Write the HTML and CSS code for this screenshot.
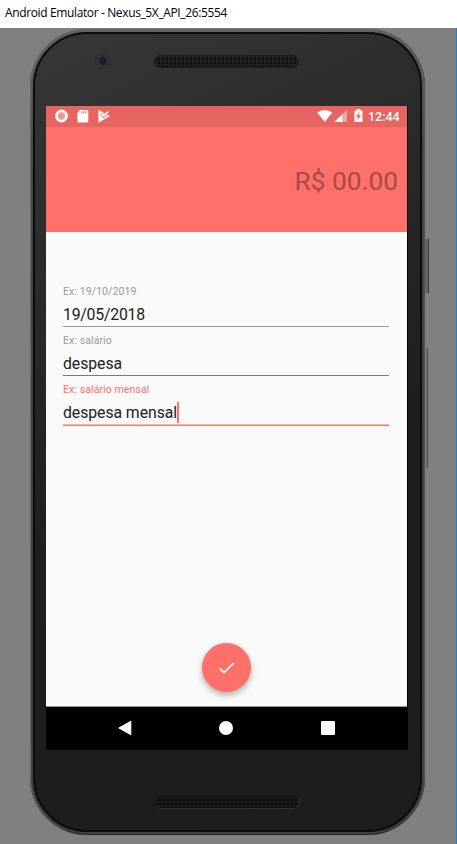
FILE: index.html
```
<!DOCTYPE html>
<html lang="pt-BR">
<head>
<meta charset="utf-8">
<title>Android Emulator</title>
<link rel="stylesheet" href="styles.css">
</head>
<body>
<header class="titlebar"><span class="title">Android Emulator - Nexus_5X_API_26:5554</span></header>
<main class="stage">
  <div class="phone">
    <i class="side-button power"></i><i class="side-button volume"></i>
    <div class="body">
      <div class="top">
        <span class="camera"></span>
        <span class="speaker"></span>
      </div>
      <div class="screen">
        <div class="statusbar">
          <svg class="status-left" width="58" height="14" viewBox="0 0 58 14">
            <circle cx="6.5" cy="7" r="5.2" fill="#f3b1ae" stroke="#fff" stroke-width="2.4"/>
            <circle cx="6.5" cy="7" r="2.6" fill="#ed9490"/>
            <path d="M24.8 1H32q1.3 0 1.3 1.3v9.9q0 1.3-1.3 1.3h-8.2q-1.4 0-1.4-1.3V4z" fill="#fff"/>
            <path d="M26.8 2.2v2.1M28.8 2.2v2.1M30.8 2.2v2.1" stroke="#e66560" stroke-width="1"/>
            <path d="M43.7 1.4 54.5 7.1 43.7 13.2z" fill="#fff" stroke="#fff" stroke-width=".5" stroke-linejoin="round"/>
            <path d="m45.9 4.6 2.8 2.9 5.4-5.7" fill="none" stroke="#e66560" stroke-width="2.8"/>
            <path d="m46.2 4.7 2.5 2.5 4.4-4.7" fill="none" stroke="#fff" stroke-width="1.7"/>
          </svg>
          <svg class="status-right" width="48" height="14" viewBox="0 0 48 14">
            <path d="M.2 3.6Q7.7-1.8 15.3 3.6L7.8 13z" fill="#fff"/>
            <path d="M30 .7V13H17.3z" fill="#f1a6a3"/>
            <path d="M25.3 5.3V13h-8z" fill="#fff"/>
            <path d="M38.2 1.4h1.5V0h3.6v1.4h1.4q.8 0 .8.8v10q0 .8-.8.8h-6.5q-.8 0-.8-.8v-10q0-.8.8-.8z" fill="#fff"/>
            <path d="M42.7 2.8 39 8h2.1l-.8 3.4L44 6.5h-2z" fill="#e66560"/>
          </svg>
          <span class="clock">12:44</span>
        </div>
        <div class="amount">R$ 00.00</div>
        <div class="form">
          <div class="field date"><div class="label">Ex: 19/10/2019</div><div class="value">19/05/2018</div></div>
          <div class="field middle"><div class="label">Ex: salário</div><div class="value">despesa</div></div>
          <div class="field active"><div class="label">Ex: salário mensal</div><div class="value">despesa mensal<i class="caret"></i></div></div>
          <div class="fab">
            <svg width="20" height="16" viewBox="0 0 20 16"><path d="m2.8 8.3 4.2 4.3L16.8 3" fill="none" stroke="#fff" stroke-width="1.7"/></svg>
          </div>
        </div>
        <div class="navbar">
          <svg width="14" height="16" viewBox="0 0 14 16"><path d="M12.8 1.3v13.4L.8 8z" fill="#fff" stroke="#fff" stroke-linejoin="round"/></svg>
          <i class="home"></i>
          <i class="recent"></i>
        </div>
      </div>
      <div class="bottom"><span class="speaker"></span></div>
    </div>
  </div>
</main>
</body>
</html>
```
FILE: styles.css
```
* { box-sizing: border-box; }
body {
  margin: 0;
  width: 457px;
  height: 844px;
  overflow: hidden;
  background: #fff;
  font-family: Roboto, sans-serif;
}
.titlebar { height: 28px; padding-left: 5px; display: flex; align-items: center; }
.title {
  font: 12px/16px "Open Sans", sans-serif;
  color: #000;
  white-space: nowrap;
  letter-spacing: -0.37px;
  margin-top: -2px;
}
.stage {
  height: 816px;
  background: #808080;
  border-right: 1px solid #1c7fd0;
  padding: 1px 0 0 30px;
}
.phone {
  position: relative;
  width: 395px;
  height: 806px;
  padding: 3px;
  border-radius: 57px;
  background: linear-gradient(180deg, #626262 0, #484848 15%, #403e3f 50%, #424041 100%);
  box-shadow: inset 1px 0 1px #696969, inset -1px 0 1px #555, inset 0 -1px 0 #181818;
}
.body {
  height: 800px;
  border: 2px solid #0c0c0c;
  border-radius: 54px;
  padding: 0 11px;
  background: linear-gradient(155deg, #373738 0, #2b2b2c 25%, #1e1e1f 55%, #1d1d1e 100%);
}
.side-button { position: absolute; }
.power { left: 395px; top: 210px; width: 4px; height: 54px; background: #666; border-right: 1px solid #393939; }
.volume { left: 395px; top: 319px; width: 3px; height: 120px; background: #777; border-right: 1px solid #4b4b4b; }
.top { height: 72px; display: flex; padding: 19px 0 0 49px; }
.camera {
  width: 16px;
  height: 16px;
  border-radius: 50%;
  background: radial-gradient(circle, #1b1b29 0 2px, #242431 4px, #333334 5px, #2f2f30 8px);
}
.speaker {
  display: block;
  width: 145px;
  height: 13px;
  border-radius: 7px;
  border: 1px solid #1c1c1d;
  background: radial-gradient(circle, #0c0c0c 0 .9px, transparent 1.3px) 2px 1px / 4px 4px, #202021;
}
.top .speaker { margin: 2px 0 0 43px; }
.bottom .speaker { border-color: #181818 #2c2c2c #303030 #181818; background-color: #191919; }
.screen { width: 362px; height: 644px; background: #000; }
.statusbar {
  width: 361px;
  height: 21px;
  padding: 3px 7px 0 9px;
  display: flex;
  background: #e66560;
}
.status-right { margin-left: auto; }
.clock {
  margin-left: 3px;
  width: 32px;
  font-size: 12.5px;
  line-height: 16px;
  font-weight: 500;
  color: #fff;
  white-space: nowrap;
}
.amount {
  width: 361px;
  height: 105px;
  padding: 32px 9px 0 0;
  background: #ff706a;
  color: #a54b48;
  font-size: 26.3px;
  line-height: 44px;
  text-align: right;
}
.form {
  width: 361px;
  height: 475px;
  padding: 52px 18px 0 17px;
  background: #fafafa;
  border-bottom: 1px solid #999;
}
.field { height: 49px; }
.label { height: 16px; font-size: 10.6px; line-height: 16px; color: #9b9b9b; letter-spacing: .05px; }
.value {
  display: flex;
  height: 27px;
  padding-top: 3px;
  font-size: 15.8px;
  line-height: 24px;
  color: #212121;
  border-bottom: 1px solid #999;
  white-space: nowrap;
  letter-spacing: -.06px;
}
.date .value { letter-spacing: -.22px; }
.middle .value { border-color: #787878; }
.active .label { color: #ff706a; }
.active .value { height: 28px; border-bottom: 1px solid #ff706a; box-shadow: inset 0 -1px #fcb8b5; }
.caret { width: 1.5px; height: 21px; background: #ff706a; margin-top: 1px; }
.fab {
  width: 49px;
  height: 49px;
  margin: 212px 0 0 139px;
  border-radius: 50%;
  background: #ff706a;
  box-shadow: 0 3px 6px rgba(0,0,0,.3);
  display: flex;
  align-items: center;
  justify-content: center;
}
.navbar {
  height: 43px;
  padding: 0 73px 2px 72px;
  display: flex;
  align-items: center;
  justify-content: space-between;
}
.home { width: 14px; height: 14px; border-radius: 50%; background: #fff; margin-right: 1px; }
.recent { width: 14px; height: 14px; border-radius: 1px; background: #fff; }
.bottom { padding: 46px 0 0 109px; }
```
